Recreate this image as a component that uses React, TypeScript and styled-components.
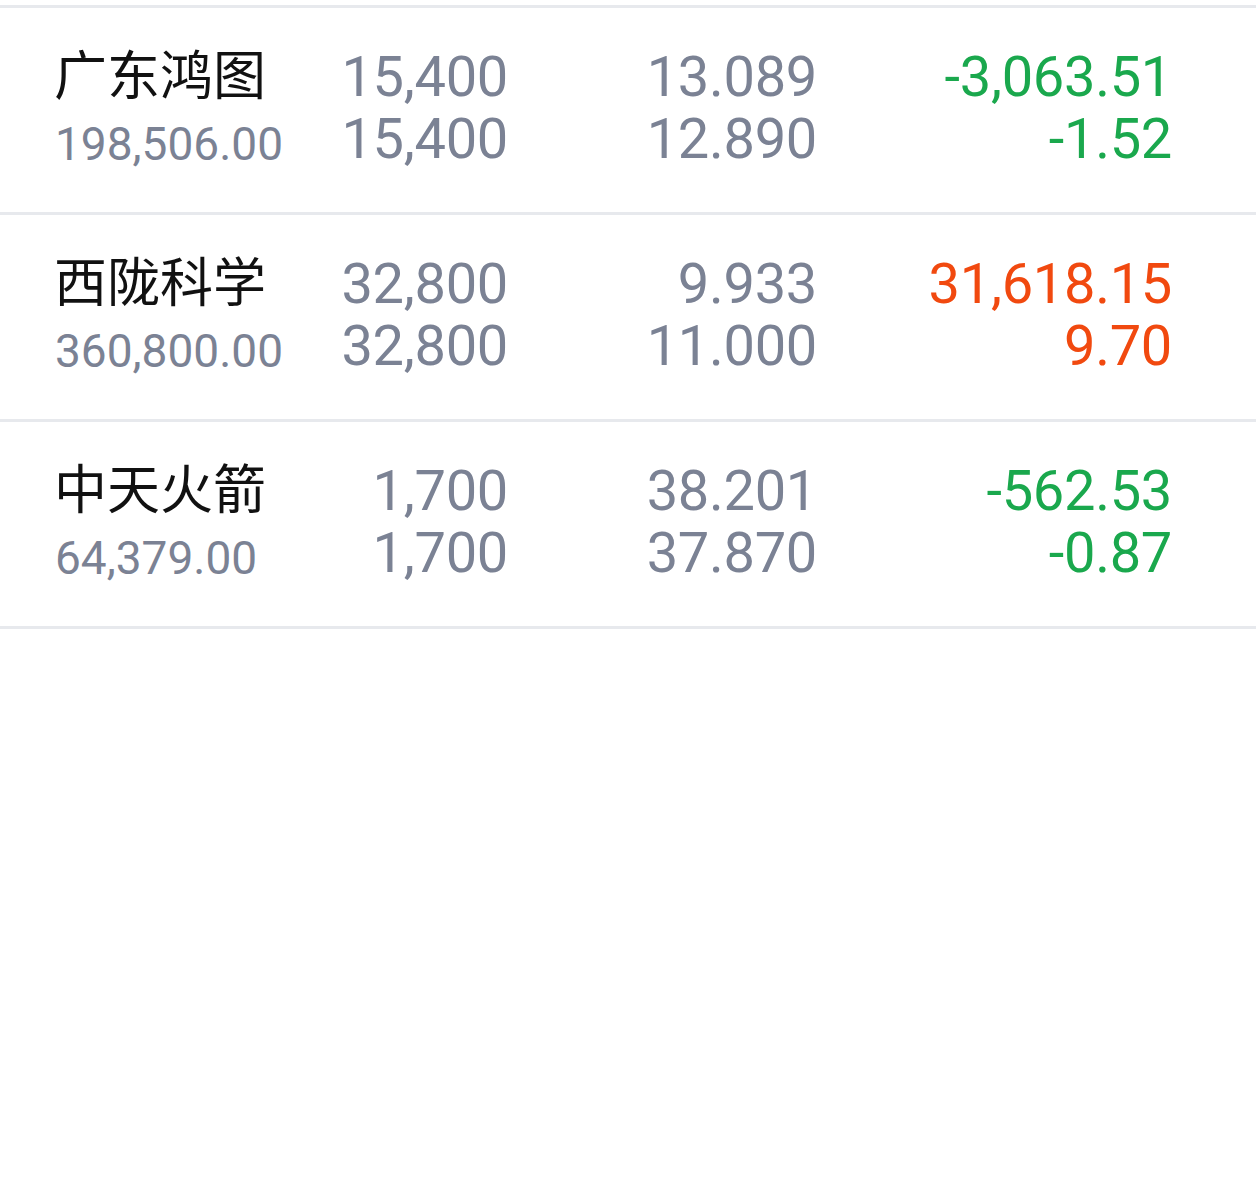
import React from 'react';
import styled, { createGlobalStyle } from 'styled-components';

interface Holding {
  name: string;
  marketValue: string;
  shares: string;
  available: string;
  cost: string;
  price: string;
  profit: string;
  profitPct: string;
  trend: 'up' | 'down';
}

const holdings: Holding[] = [
  {
    name: '广东鸿图',
    marketValue: '198,506.00',
    shares: '15,400',
    available: '15,400',
    cost: '13.089',
    price: '12.890',
    profit: '-3,063.51',
    profitPct: '-1.52',
    trend: 'down',
  },
  {
    name: '西陇科学',
    marketValue: '360,800.00',
    shares: '32,800',
    available: '32,800',
    cost: '9.933',
    price: '11.000',
    profit: '31,618.15',
    profitPct: '9.70',
    trend: 'up',
  },
  {
    name: '中天火箭',
    marketValue: '64,379.00',
    shares: '1,700',
    available: '1,700',
    cost: '38.201',
    price: '37.870',
    profit: '-562.53',
    profitPct: '-0.87',
    trend: 'down',
  },
];

const App: React.FC = () => {
  return (
    <>
      <GlobalStyle />
      <Page>
        <List>
          {holdings.map((h) => (
            <Row key={h.name}>
              <NameCell>
                <Name>{h.name}</Name>
                <SubValue>{h.marketValue}</SubValue>
              </NameCell>
              <NumCell>
                <Num>{h.shares}</Num>
                <Num>{h.available}</Num>
              </NumCell>
              <NumCell>
                <Num>{h.cost}</Num>
                <Num>{h.price}</Num>
              </NumCell>
              <NumCell>
                <Num $trend={h.trend}>{h.profit}</Num>
                <Num $trend={h.trend}>{h.profitPct}</Num>
              </NumCell>
            </Row>
          ))}
        </List>
      </Page>
    </>
  );
};

export default App;

// Styled Components
const GlobalStyle = createGlobalStyle`
  html, body {
    margin: 0;
    padding: 0;
    background: #ffffff;
  }
  body {
    font-family: Roboto, "Noto Sans", "Noto Sans CJK SC", sans-serif;
  }
`;

const Page = styled.div`
  width: 1256px;
  min-height: 1199px;
  background: #ffffff;
  padding-top: 5px;
  box-sizing: border-box;
`;

const List = styled.div`
  display: flex;
  flex-direction: column;
  border-bottom: 3px solid #e7e9ed;
`;

const Row = styled.div`
  display: grid;
  grid-template-columns: 230px 222px 309px 355px;
  padding: 38px 0 42px 56px;
  border-top: 3px solid #e7e9ed;
  height: 124px;
`;

const NameCell = styled.div`
  display: flex;
  flex-direction: column;
`;

const Name = styled.div`
  font-family: "Noto Sans CJK SC", sans-serif;
  font-size: 53px;
  line-height: 62px;
  color: #111111;
  white-space: nowrap;
  margin-top: -5px;
  margin-left: -2px;
`;

const SubValue = styled.div`
  font-family: Roboto, sans-serif;
  font-size: 46px;
  line-height: 62px;
  color: #7b8294;
  white-space: nowrap;
  margin-top: 10px;
  margin-left: -1px;
`;

const NumCell = styled.div`
  display: flex;
  flex-direction: column;
  align-items: flex-end;
`;

const Num = styled.div<{ $trend?: 'up' | 'down' }>`
  font-family: Roboto, sans-serif;
  font-size: 56px;
  line-height: 62px;
  letter-spacing: -0.3px;
  white-space: nowrap;
  color: ${({ $trend }) =>
    $trend === 'up' ? '#f1490f' : $trend === 'down' ? '#1aa84d' : '#7b8294'};
`;
